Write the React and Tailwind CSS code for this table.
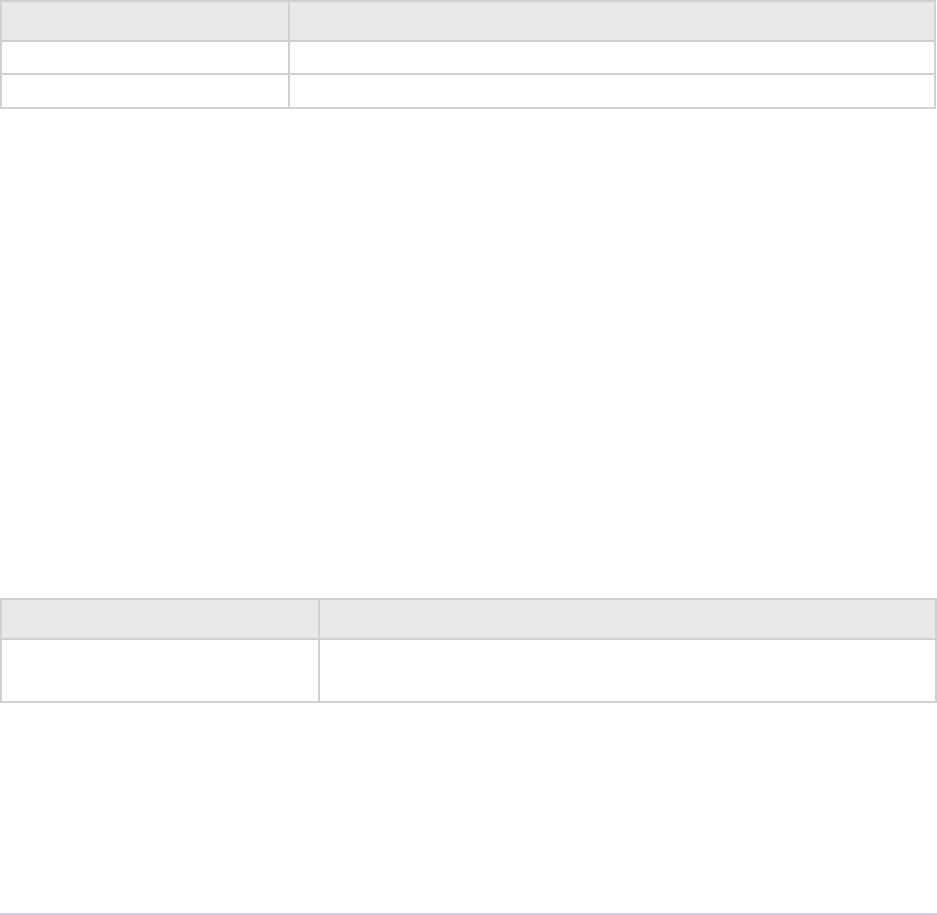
export default function App() {
  return (
    <div className="w-[937px] bg-white" style={{ fontFamily: '"Liberation Sans", Arial, sans-serif' }}>
      {/* Table 1 */}
      <div className="w-[936px] border-2 border-[#d0d0d0]">
        <div className="flex h-[38px] bg-[#e8e8e8]">
          <div className="w-[288px] border-r-2 border-[#d0d0d0]" />
          <div className="flex-1" />
        </div>
        <div className="flex h-[33px] border-t-2 border-[#d0d0d0]">
          <div className="w-[288px] border-r-2 border-[#d0d0d0]" />
          <div className="flex-1" />
        </div>
        <div className="flex h-[34px] border-t-2 border-[#d0d0d0]">
          <div className="w-[288px] border-r-2 border-[#d0d0d0]" />
          <div className="flex-1" />
        </div>
      </div>

      <div className="h-[489px]" />

      {/* Table 2 */}
      <div className="w-[937px] border-2 border-[#d0d0d0]">
        <div className="flex h-[38px] bg-[#e8e8e8]">
          <div className="w-[318px] border-r-2 border-[#d0d0d0]" />
          <div className="flex-1" />
        </div>
        <div className="flex h-[63px] border-t-2 border-[#d0d0d0]">
          <div className="w-[318px] border-r-2 border-[#d0d0d0]" />
          <div className="flex-1" />
        </div>
      </div>

      <div className="h-[210px]" />
      <div className="h-[2px] bg-[#d6c8e6]" />
    </div>
  );
}
